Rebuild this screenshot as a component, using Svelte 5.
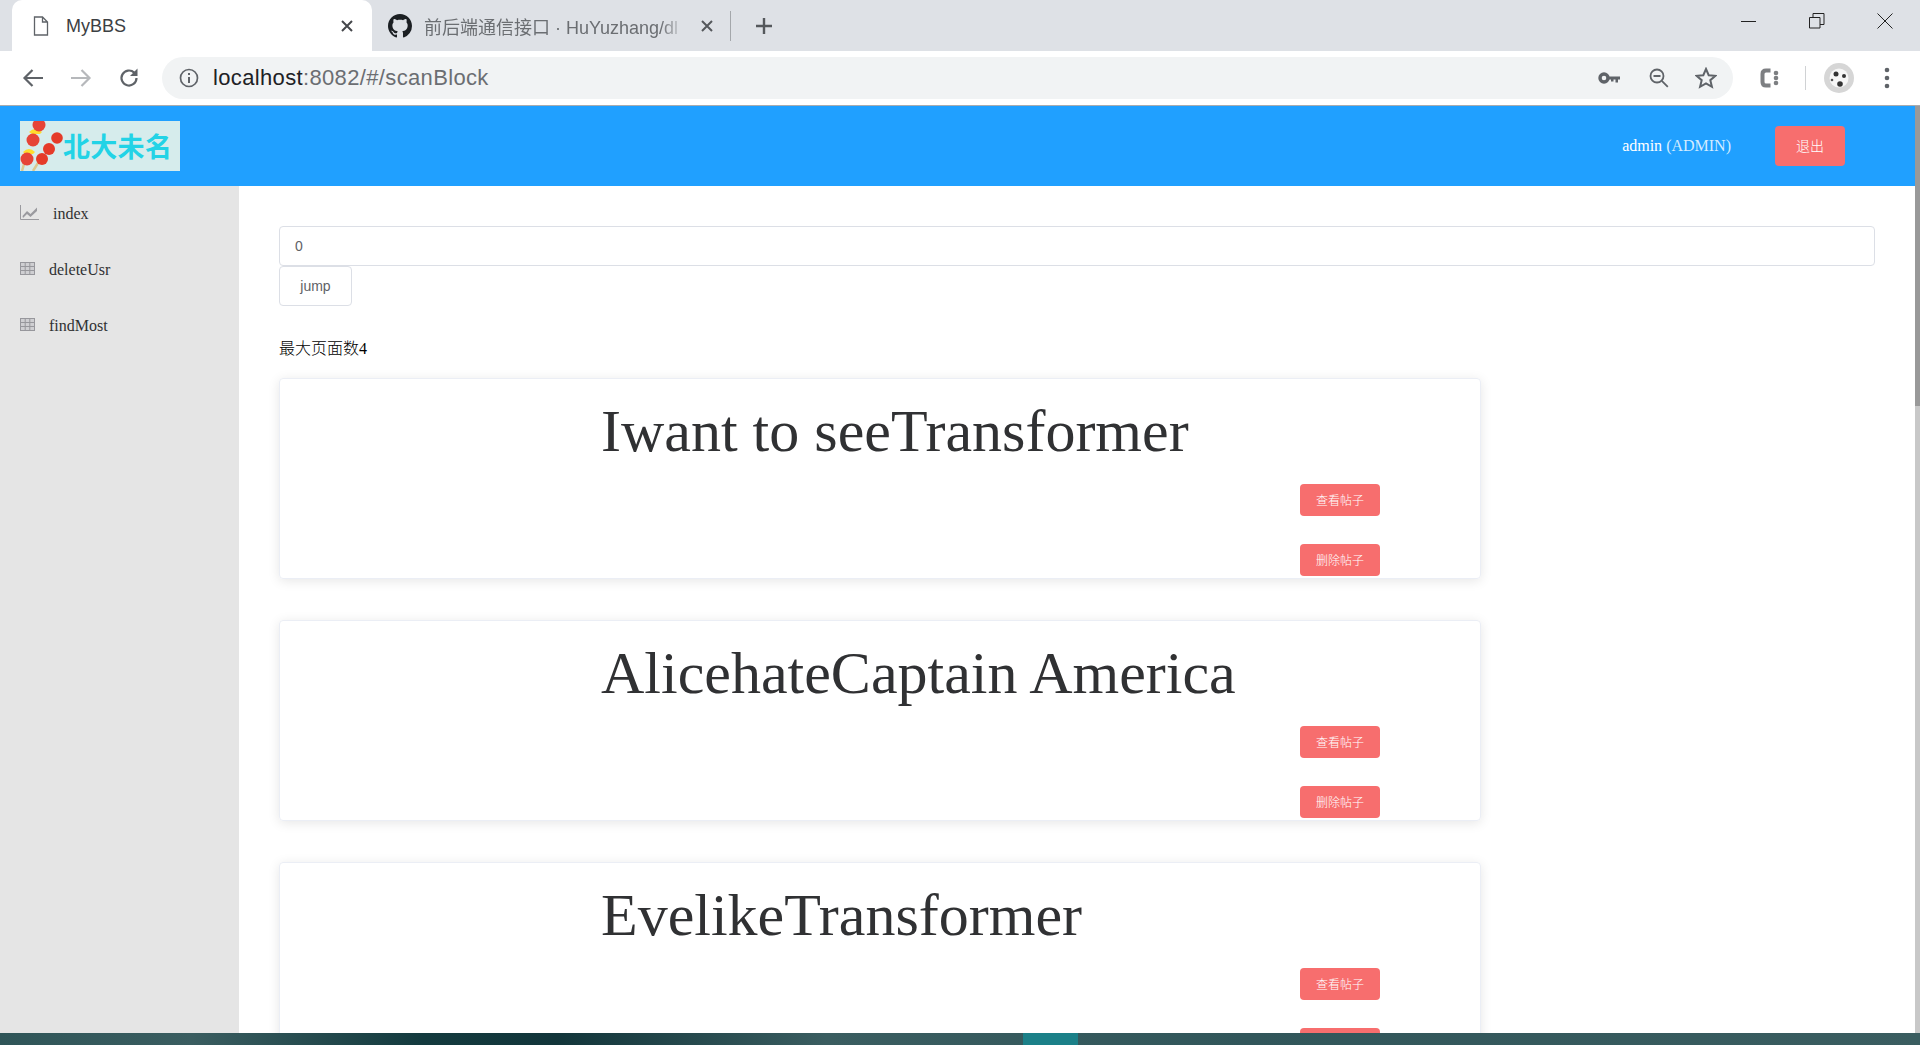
<script>
  const menu = [
    { name: "index", icon: "chart" },
    { name: "deleteUsr", icon: "table" },
    { name: "findMost", icon: "table" }
  ];

  const posts = ["Iwant to seeTransformer", "AlicehateCaptain America", "EvelikeTransformer"];
</script>

<div class="screen">
  <div class="tabstrip">
    <div class="tab active">
      <svg class="favicon" width="16" height="20" viewBox="0 0 16 20">
        <path d="M1.5 1h8l5 5v13h-13zM9.5 1v5h5" fill="none" stroke="#5f6368" stroke-width="1.3" />
      </svg>
      <span class="tab-title main-title">MyBBS</span>
      <svg class="tab-x" width="12" height="12" viewBox="0 0 12 12">
        <path d="M1 1l10 10M11 1L1 11" stroke="#45474b" stroke-width="2" />
      </svg>
    </div>
    <div class="tab second">
      <svg class="favicon" width="24" height="24" viewBox="0 0 16 16">
        <path fill="#1b1f23" d="M8 0C3.58 0 0 3.58 0 8c0 3.54 2.29 6.53 5.47 7.59.4.07.55-.17.55-.38 0-.19-.01-.82-.01-1.49-2.01.37-2.53-.49-2.69-.94-.09-.23-.48-.94-.82-1.13-.28-.15-.68-.52-.01-.53.63-.01 1.08.58 1.23.82.72 1.21 1.87.87 2.33.66.07-.52.28-.87.51-1.07-1.78-.2-3.64-.89-3.64-3.95 0-.87.31-1.59.82-2.15-.08-.2-.36-1.02.08-2.12 0 0 .67-.21 2.2.82.64-.18 1.32-.27 2-.27s1.36.09 2 .27c1.53-1.04 2.2-.82 2.2-.82.44 1.1.16 1.92.08 2.12.51.56.82 1.27.82 2.15 0 3.07-1.87 3.75-3.65 3.95.29.25.54.73.54 1.48 0 1.07-.01 1.93-.01 2.2 0 .21.15.46.55.38A8.01 8.01 0 0 0 16 8c0-4.42-3.58-8-8-8z" />
      </svg>
      <span class="tab-title dim">前后端通信接口 · HuYuzhang/dl</span>
      <svg class="tab-x" width="12" height="12" viewBox="0 0 12 12">
        <path d="M1 1l10 10M11 1L1 11" stroke="#55585c" stroke-width="2" />
      </svg>
    </div>
    <div class="tab-sep"></div>
    <svg class="plus" width="18" height="18" viewBox="0 0 18 18">
      <path d="M9 1v16M1 9h16" stroke="#55585c" stroke-width="2.4" />
    </svg>
    <div class="win-controls">
      <svg width="16" height="16" viewBox="0 0 16 16"><path d="M0 8.5h15" stroke="#222" /></svg>
      <svg width="16" height="16" viewBox="0 0 16 16">
        <path d="M.5 4.500h10.500v10.500h-10.500zM4 4.500v-4h11v11h-4" fill="none" stroke="#222" />
      </svg>
      <svg width="16" height="16" viewBox="0 0 16 16"><path d="M.5.500l15 15M15.500.500l-15 15" stroke="#222" /></svg>
    </div>
  </div>

  <div class="toolbar">
    <div class="nav">
      <svg width="22" height="20" viewBox="0 0 22 20">
        <path d="M21 10H3M10.500 2L2.500 10l8 8" fill="none" stroke="#5f6368" stroke-width="2.200" />
      </svg>
      <svg width="22" height="20" viewBox="0 0 22 20">
        <path d="M1 10h18M11.500 2l8 8-8 8" fill="none" stroke="#b6b8bb" stroke-width="2.200" />
      </svg>
      <svg width="22" height="22" viewBox="0 0 22 22">
        <path d="M18.500 11a7.500 7.500 0 1 1-2.300-5.400" fill="none" stroke="#5f6368" stroke-width="2.200" />
        <path d="M19.500 1.500v7.500h-7.500z" fill="#5f6368" />
      </svg>
    </div>
    <div class="omnibox">
      <svg width="20" height="20" viewBox="0 0 20 20">
        <circle cx="10" cy="10" r="8.500" fill="none" stroke="#5f6368" stroke-width="1.700" />
        <path d="M10 9v6M10 5v2" stroke="#5f6368" stroke-width="2" />
      </svg>
      <span class="url"><b>localhost</b>:8082/#/scanBlock</span>
      <div class="omni-icons">
        <svg class="key" width="22" height="12" viewBox="0 0 22 12">
          <circle cx="6" cy="6" r="4" fill="none" stroke="#5f6368" stroke-width="3.400" />
          <path d="M9 4.500h13v3h-2v3h-2.500v-3h-2v2h-2.500v-2H9z" fill="#5f6368" />
        </svg>
        <svg width="20" height="20" viewBox="0 0 20 20">
          <circle cx="8" cy="8" r="6.500" fill="none" stroke="#5f6368" stroke-width="1.800" />
          <path d="M4.500 8h7M12.800 12.800l6 6" stroke="#5f6368" stroke-width="1.800" />
        </svg>
        <svg width="22" height="22" viewBox="0 0 22 22">
          <path d="M11 2l2.700 6.200 6.700.6-5.100 4.400 1.600 6.600L11 16.300l-5.900 3.500 1.600-6.600L1.600 8.800l6.700-.6z" fill="none" stroke="#5f6368" stroke-width="2" />
        </svg>
      </div>
    </div>
    <div class="ext">
      <svg width="20" height="22" viewBox="0 0 20 22">
        <path d="M11.500 3.500H7Q3.500 3.500 3.500 7v8q0 3.500 3.500 3.500h4.500" fill="none" stroke="#7d7f82" stroke-width="4" />
        <circle cx="17" cy="6" r="2.300" fill="#7d7f82" />
        <circle cx="17" cy="11" r="2.300" fill="#7d7f82" />
        <circle cx="17" cy="16" r="2.300" fill="#7d7f82" />
      </svg>
      <div class="ext-sep"></div>
      <svg width="30" height="30" viewBox="0 0 30 30">
        <circle cx="15" cy="15" r="15" fill="#d6d6d6" />
        <circle cx="15" cy="15" r="9.500" fill="#f6f6f6" />
        <circle cx="12" cy="11" r="2.500" fill="#333" />
        <circle cx="20" cy="13" r="2" fill="#333" />
        <circle cx="16" cy="21" r="2.800" fill="#333" />
        <circle cx="8" cy="17" r="1.300" fill="#555" />
      </svg>
      <svg width="6" height="22" viewBox="0 0 6 22">
        <circle cx="3" cy="3" r="2.300" fill="#5f6368" />
        <circle cx="3" cy="11" r="2.300" fill="#5f6368" />
        <circle cx="3" cy="19" r="2.300" fill="#5f6368" />
      </svg>
    </div>
  </div>

  <div class="page">
    <div class="app">
      <header class="app-header">
        <div class="logo">
          <svg width="43" height="50" viewBox="0 0 43 50">
            <path d="M2 50l4-14M13 50l10-16" stroke="#dcc88f" stroke-width="2.500" />
            <path d="M3 31q6-6 12 0l-2 2H5z" fill="#ffdc2e" />
            <path d="M9 11q6-6 13 0l-2 2h-8z" fill="#ffdc2e" />
            <circle cx="19" cy="4" r="6.500" fill="#e64437" />
            <circle cx="13" cy="19" r="6.500" fill="#e64437" />
            <circle cx="7" cy="38" r="6.500" fill="#e64437" />
            <circle cx="37" cy="17" r="5.800" fill="#e53b29" />
            <circle cx="29" cy="28" r="6" fill="#e53b29" />
            <circle cx="22" cy="38" r="6" fill="#e53b29" />
          </svg>
          <span class="logo-text">北大未名</span>
        </div>
        <div class="user"><b>admin</b> (ADMIN)</div>
        <button class="btn logout">退出</button>
      </header>

      <div class="body">
        <nav class="sidebar">
          {#each menu as item}
            <div class="menu-item">
              {#if item.icon === "chart"}
                <svg class="mi chart" width="19" height="15" viewBox="0 0 19 15">
                  <path d="M.5 0v14.500H19" fill="none" stroke="#9a9a9f" />
                  <path d="M2.500 11l4.500-5 3.500 3L17 2.500v3.500L10.500 12 7 9l-4 4z" fill="#9a9a9f" />
                </svg>
              {:else}
                <svg class="mi grid" width="15" height="13" viewBox="0 0 15 13">
                  <rect x=".5" y=".5" width="14" height="12" fill="#cfcfd2" stroke="#97979c" />
                  <path d="M.5 4.500h14M.5 8.500h14M5.200.500v12M9.800.500v12" stroke="#97979c" />
                </svg>
              {/if}
              <span>{item.name}</span>
            </div>
          {/each}
        </nav>

        <main class="content">
          <input class="page-input" value="0" />
          <button class="jump">jump</button>
          <p class="max-page">最大页面数4</p>
          {#each posts as post}
            <section class="card">
              <div class="card-title">{post}</div>
              <div class="actions">
                <button class="btn small">查看帖子</button>
                <button class="btn small">删除帖子</button>
              </div>
            </section>
          {/each}
        </main>
      </div>
    </div>
    <div class="scrollbar"><div class="thumb"></div></div>
  </div>

  <div class="taskbar"><div class="task-active"></div></div>
</div>

<style>
  :global(body) {
    margin: 0;
  }

  .screen {
    display: flex;
    flex-direction: column;
    height: 1045px;
    overflow: hidden;
    font-family: "Liberation Serif", "Noto Sans CJK SC", serif;
    color: #303133;
    background: #fff;
  }

  /* browser chrome */
  .tabstrip {
    display: flex;
    align-items: center;
    flex: none;
    height: 51px;
    padding-left: 12px;
    background: #dee1e6;
    font-family: "Liberation Sans", "Noto Sans CJK SC", sans-serif;
  }

  .tab {
    display: flex;
    align-items: center;
    height: 51px;
    box-sizing: border-box;
  }

  .tab.active {
    width: 360px;
    padding: 0 19px 0 21px;
    background: #fff;
    border-radius: 10px 10px 0 0;
  }

  .tab.second {
    width: 346px;
    padding: 0 5px 0 16px;
  }

  .tab-title {
    flex: 1;
    min-width: 0;
    margin-left: 17px;
    font-size: 18px;
    color: #3c4043;
    white-space: nowrap;
    overflow: hidden;
  }

  .main-title {
    padding-top: 2px;
  }

  .tab-title.dim {
    margin-left: 12px;
    margin-right: 8px;
    color: #6b6e72;
    -webkit-mask-image: linear-gradient(90deg, #000 88%, transparent 97%);
    mask-image: linear-gradient(90deg, #000 88%, transparent 97%);
  }

  .tab-sep {
    width: 1px;
    height: 30px;
    margin-left: 12px;
    background: #a4a7ab;
  }

  .plus {
    margin-left: 24px;
  }

  .win-controls {
    display: flex;
    gap: 52px;
    margin-left: auto;
    margin-right: 27px;
    margin-top: -10px;
  }

  .toolbar {
    display: flex;
    align-items: center;
    flex: none;
    height: 55px;
    box-sizing: border-box;
    border-bottom: 1px solid #a9abae;
    padding: 0 0 0 22px;
    background: #fff;
  }

  .nav {
    display: flex;
    align-items: center;
    gap: 26px;
    width: 140px;
  }

  .omnibox {
    display: flex;
    align-items: center;
    width: 1571px;
    height: 42px;
    box-sizing: border-box;
    padding: 0 16px 0 17px;
    background: #f1f3f4;
    border-radius: 21px;
  }

  .url {
    margin-left: 14px;
    font-size: 22px;
    letter-spacing: 0.35px;
    color: #6b6e72;
    font-family: "Liberation Sans", sans-serif;
  }

  .url b {
    font-weight: 400;
    color: #202124;
  }

  .omni-icons {
    display: flex;
    align-items: center;
    gap: 26px;
    margin-left: auto;
  }

  .key {
    margin-right: 3px;
  }

  .ext {
    display: flex;
    align-items: center;
    margin-left: 26px;
  }

  .ext-sep {
    width: 1px;
    height: 24px;
    margin: 0 18px 0 26px;
    background: #d0d2d4;
  }

  .ext svg:last-child {
    margin-left: 30px;
  }

  /* page */
  .page {
    display: flex;
    flex: 1;
    min-height: 0;
  }

  .app {
    flex: 1;
    min-width: 0;
    display: flex;
    flex-direction: column;
  }

  .app-header {
    display: flex;
    align-items: center;
    flex: none;
    height: 80px;
    padding: 0 70px 0 20px;
    background: #20a0ff;
    color: #fff;
  }

  .logo {
    display: flex;
    align-items: center;
    width: 160px;
    height: 50px;
    overflow: hidden;
    background: #d6ecec;
  }

  .logo svg {
    flex: none;
  }

  .logo-text {
    font-family: "Noto Sans CJK SC", sans-serif;
    font-size: 27px;
    letter-spacing: 0.3px;
    font-weight: 700;
    line-height: 46px;
    color: #22d3e6;
    white-space: nowrap;
  }

  .user {
    margin-left: auto;
    font-size: 16px;
    color: #d3ecff;
  }

  .user b {
    font-weight: 400;
    color: #fff;
  }

  .btn {
    border: none;
    border-radius: 4px;
    background: #f76e6e;
    color: #fff;
    font-family: "Noto Sans CJK SC", sans-serif;
    font-weight: 300;
  }

  .logout {
    width: 70px;
    height: 40px;
    margin-left: 44px;
    padding: 0 0 2px;
    font-size: 14px;
  }

  .body {
    display: flex;
    flex: 1;
    min-height: 0;
  }

  .sidebar {
    flex: none;
    width: 239px;
    box-sizing: border-box;
    padding: 0 20px;
    background: #e5e5e5;
  }

  .menu-item {
    display: flex;
    align-items: center;
    gap: 14px;
    height: 56px;
    font-size: 16px;
  }

  .mi {
    flex: none;
    margin-top: -3px;
  }

  .content {
    flex: 1;
    min-width: 0;
    padding: 40px 40px 0;
  }

  .page-input {
    display: block;
    width: 100%;
    height: 40px;
    box-sizing: border-box;
    padding: 0 15px;
    border: 1px solid #dcdfe6;
    border-radius: 4px;
    font-family: "Liberation Sans", sans-serif;
    font-size: 14px;
    color: #606266;
  }

  .jump {
    display: block;
    width: 73px;
    height: 40px;
    padding: 0;
    border: 1px solid #dcdfe6;
    border-radius: 4px;
    background: #fff;
    font-family: "Liberation Sans", sans-serif;
    font-size: 14px;
    color: #606266;
  }

  .max-page {
    margin: 33px 0 19px;
    font-size: 16px;
    font-weight: 300;
    line-height: 20px;
    color: #000;
  }

  .card {
    height: 201px;
    box-sizing: border-box;
    margin-bottom: 41px;
    border: 1px solid #ebeef5;
    border-radius: 4px;
    width: 1202px;
    box-shadow: 0 2px 12px 0 rgba(0, 0, 0, 0.1);
  }

  .card-title {
    height: 105px;
    padding-left: 321px;
    font-size: 60px;
    line-height: 105px;
    white-space: nowrap;
  }

  .actions {
    display: flex;
    flex-direction: column;
    align-items: flex-start;
    gap: 28px;
    padding-left: 1020px;
  }

  .small {
    width: 80px;
    height: 32px;
    padding: 0 0 2px;
    font-size: 12px;
  }

  .scrollbar {
    flex: none;
    width: 5px;
    background: #c8c8c8;
  }

  .thumb {
    height: 300px;
    background: #999;
  }

  .taskbar {
    display: flex;
    flex: none;
    height: 12px;
    padding-left: 1023px;
    background: linear-gradient(90deg, #2f5558 0, #3a5d60 10%, #133a3e 22%, #12353a 29%, #3a5d60 43%, #31565a 65%, #3a5d60 100%);
  }

  .task-active {
    width: 55px;
    background: #1b8088;
  }
</style>
